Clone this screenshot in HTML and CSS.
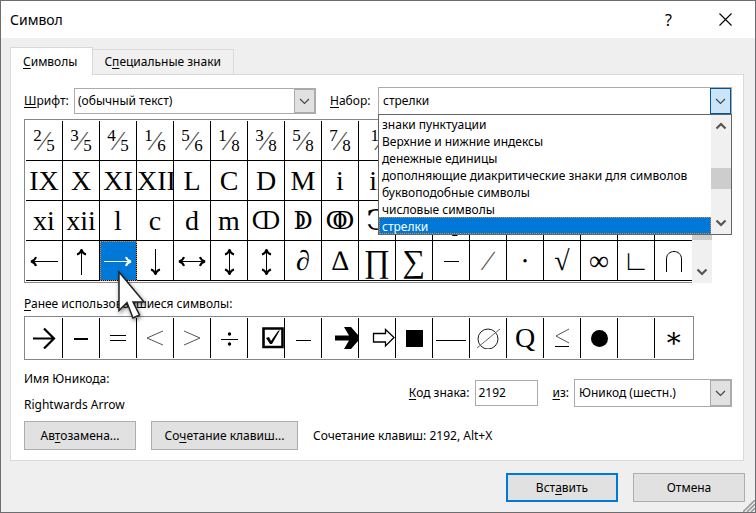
FILE: index.html
```html
<!DOCTYPE html>
<html lang="ru">
<head>
<meta charset="utf-8">
<title>Символ</title>
<link rel="stylesheet" href="styles.css">
</head>
<body>
<main class="dialog">
  <header class="titlebar">
    <h1>Символ</h1>
    <button class="tool help" aria-label="Справка">?</button>
    <button class="tool" aria-label="Закрыть"><svg width="13" height="13" viewBox="0 0 13 13"><path d="M.5.5l12 12M12.500.5l-12 12" stroke="#000" stroke-width="1.1" fill="none"/></svg></button>
  </header>
  <nav class="tabs" role="tablist">
    <button class="tab active" role="tab" aria-selected="true"><span><u>С</u>имволы</span></button>
    <button class="tab" role="tab" aria-selected="false"><span>С<u>п</u>ециальные знаки</span></button>
  </nav>
  <section class="panel">
    <div class="filters">
      <label for="font"><u>Ш</u>рифт:</label>
      <div class="combo font-combo">
        <select id="font"><option>(обычный текст)</option></select>
        <span class="drop"><svg width="11" height="7" viewBox="0 0 11 7"><path d="M1 1l4.500 4.500L10 1" fill="none" stroke="#444" stroke-width="1.200"/></svg></span>
      </div>
      <label for="subset" class="subset-label"><u>Н</u>абор:</label>
      <div class="combo subset-combo">
        <select id="subset"><option>стрелки</option></select>
        <span class="drop open"><svg width="11" height="7" viewBox="0 0 11 7"><path d="M1 1l4.500 4.500L10 1" fill="none" stroke="#444" stroke-width="1.200"/></svg></span>
        <div class="menu">
          <ul role="listbox" aria-label="Набор">
            <li role="option">знаки пунктуации</li>
            <li role="option">Верхние и нижние индексы</li>
            <li role="option">денежные единицы</li>
            <li role="option">дополняющие диакритические знаки для символов</li>
            <li role="option">буквоподобные символы</li>
            <li role="option">числовые символы</li>
            <li role="option" aria-selected="true" class="selected">стрелки</li>
          </ul>
          <div class="scroll">
            <svg width="12" height="8" viewBox="0 0 12 8"><path d="M1.500 6.500L6 2l4.500 4.500" fill="none" stroke="#555" stroke-width="2.200"/></svg>
            <span class="thumb"></span>
            <svg width="12" height="8" viewBox="0 0 12 8"><path d="M1.500 1.500L6 6l4.500-4.500" fill="none" stroke="#555" stroke-width="2.200"/></svg>
          </div>
        </div>
      </div>
    </div>

    <div class="symbols">
      <div class="grid-box">
        <table class="glyphs">
          <tr class="fractions"><td><sup>2</sup>⁄<sub>5</sub></td><td><sup>3</sup>⁄<sub>5</sub></td><td><sup>4</sup>⁄<sub>5</sub></td><td><sup>1</sup>⁄<sub>6</sub></td><td><sup>5</sup>⁄<sub>6</sub></td><td><sup>1</sup>⁄<sub>8</sub></td><td><sup>3</sup>⁄<sub>8</sub></td><td><sup>5</sup>⁄<sub>8</sub></td><td><sup>7</sup>⁄<sub>8</sub></td><td><sup>1</sup>⁄</td><td></td><td></td><td></td><td></td><td></td><td></td><td></td><td></td></tr>
          <tr><td>IX</td><td>X</td><td>XI</td><td>XII</td><td>L</td><td>C</td><td>D</td><td>M</td><td>i</td><td>ii</td><td></td><td></td><td></td><td></td><td></td><td></td><td></td><td></td></tr>
          <tr><td>xi</td><td>xii</td><td>l</td><td>c</td><td>d</td><td>m</td><td class="numeral">ↀ</td><td class="numeral">ↁ</td><td class="numeral">ↂ</td><td>Ↄ</td><td></td><td>q</td><td></td><td></td><td></td><td></td><td></td><td></td></tr>
          <tr class="arrows">
            <td><svg width="28" height="28" viewBox="0 0 28 28"><path class="shaft" d="M1 14.500h27"/><path class="head" d="M6 10q-1 3.500-5 4.500 4 1 5 4.500"/></svg></td>
            <td><svg width="28" height="28" viewBox="0 0 28 28"><path class="shaft" d="M14.500 2v26"/><path class="head" d="M10 7.500q3.500-1 4.500-5 1 4 4.500 5"/></svg></td>
            <td class="picked"><svg width="28" height="28" viewBox="0 0 28 28"><path class="shaft" d="M0 14.500h27"/><path class="head" d="M22 10q1 3.500 5 4.500-4 1-5 4.500"/></svg></td>
            <td><svg width="28" height="28" viewBox="0 0 28 28"><path class="shaft" d="M14.500 2v26"/><path class="head" d="M10 22.500q3.500 1 4.500 5 1-4 4.500-5"/></svg></td>
            <td><svg width="28" height="28" viewBox="0 0 28 28"><path class="shaft" d="M1 14.500h26"/><path class="head" d="M6 10q-1 3.500-5 4.500 4 1 5 4.500M22 10q1 3.500 5 4.500-4 1-5 4.500"/></svg></td>
            <td><svg width="28" height="28" viewBox="0 0 28 28"><path class="shaft" d="M14.500 2v26"/><path class="head" d="M10 7.500q3.500-1 4.500-5 1 4 4.500 5M10 22.500q3.500 1 4.500 5 1-4 4.500-5"/></svg></td>
            <td><svg width="28" height="28" viewBox="0 0 28 28"><path class="shaft" d="M14.500 2v26"/><path class="head" d="M10 7.500q3.500-1 4.500-5 1 4 4.500 5M10 22.500q3.500 1 4.500 5 1-4 4.500-5"/></svg></td>
            <td>∂</td><td>∆</td><td class="large">∏</td><td class="large">∑</td>
            <td><svg width="16" height="16" viewBox="0 0 16 16"><path class="shaft" d="M1 8.500h15"/></svg></td>
            <td class="slash">∕</td><td>∙</td><td>√</td><td>∞</td><td>∟</td>
            <td><svg width="18" height="22" viewBox="0 0 18 22"><path class="shaft" d="M1.500 22V9c0-10 15-10 15 0v13"/></svg></td>
          </tr>
        </table>
        <svg class="pointer" width="36" height="56" viewBox="0 0 36 56"><path d="M2 2v38.500l8-8L16 48l6.500-3-6.500-13h11z" fill="#fff" stroke="#222" stroke-width="1.500"/></svg>
      </div>
      <div class="scroll grid-scroll">
        <span class="thumb"></span>
        <svg width="12" height="8" viewBox="0 0 12 8"><path d="M1.500 1.500L6 6l4.500-4.500" fill="none" stroke="#555" stroke-width="2.200"/></svg>
      </div>
    </div>

    <h2 class="recent-label"><u>Р</u>анее использовавшиеся символы:</h2>
    <div class="recent-box">
      <table class="glyphs recent">
        <tr>
          <td><svg width="24" height="22" viewBox="0 0 24 22"><path d="M1 11.500h21M12 1.500l10 10-10 10" fill="none" stroke="#000" stroke-width="2.200"/></svg></td>
          <td><svg width="14" height="16" viewBox="0 0 14 16"><path d="M0 9h14" stroke="#000" stroke-width="2"/></svg></td>
          <td><svg width="16" height="16" viewBox="0 0 16 16"><path class="shaft" d="M0 5.500h16M0 10.500h16"/></svg></td>
          <td><svg width="18" height="16" viewBox="0 0 18 16"><path class="hair" d="M17 1L1 8l16 7"/></svg></td>
          <td><svg width="18" height="16" viewBox="0 0 18 16"><path class="hair" d="M1 1l16 7-16 7"/></svg></td>
          <td><svg width="18" height="16" viewBox="0 0 18 16"><path class="shaft" d="M1 9.500h17"/><circle cx="9.500" cy="4" r="1.700"/><circle cx="9.500" cy="14" r="1.700"/></svg></td>
          <td class="right"><svg width="22" height="22" viewBox="0 0 22 22"><path d="M1.500 1.500h19v18.500h-19z" fill="none" stroke="#000" stroke-width="2.600"/><path d="M4 11l3-1 2 4 7-10 2-1-8 14H8z"/></svg></td>
          <td><svg width="15" height="16" viewBox="0 0 15 16"><path class="shaft" d="M0 10.500h15"/></svg></td>
          <td class="right"><svg width="23" height="22" viewBox="0 0 23 22"><path d="M0 8.500h14L9 0h7l7 8v6l-7 8H9l5-8.500H0z"/></svg></td>
          <td class="right"><svg width="23" height="20" viewBox="0 0 23 20"><path d="M1.500 5.500h12V1.500L22 9.500l-8.500 8.500v-4h-12z" fill="none" stroke="#000" stroke-width="1.300"/></svg></td>
          <td><svg width="17" height="17" viewBox="0 0 17 17"><path d="M0 0h17v17H0z"/></svg></td>
          <td><svg width="30" height="16" viewBox="0 0 30 16"><path class="shaft" d="M0 10.500h30"/></svg></td>
          <td><svg width="24" height="22" viewBox="0 0 24 22"><circle cx="12" cy="12" r="10" fill="none" stroke="#222"/><path d="M1 21L24 2" stroke="#666"/></svg></td>
          <td>Q</td>
          <td><svg width="15" height="20" viewBox="0 0 15 20"><path class="hair" d="M14 1L1 8l13 7"/><path class="shaft" d="M0 18.500h14"/></svg></td>
          <td><svg width="17" height="17" viewBox="0 0 17 17"><circle cx="8.500" cy="8.500" r="8.500"/></svg></td>
          <td></td><td>∗</td>
        </tr>
      </table>
    </div>

    <div class="details">
      <div class="name"><p>Имя Юникода:</p><p>Rightwards Arrow</p></div>
      <div class="code">
        <label for="code"><u>К</u>од знака:</label>
        <input id="code" type="text" value="2192">
        <label for="from" class="from-label"><u>и</u>з:</label>
        <div class="combo from-combo">
          <select id="from"><option>Юникод (шестн.)</option></select>
          <span class="drop"><svg width="11" height="7" viewBox="0 0 11 7"><path d="M1 1l4.500 4.500L10 1" fill="none" stroke="#444" stroke-width="1.200"/></svg></span>
        </div>
      </div>
    </div>
    <div class="shortcuts">
      <button class="btn"><span>Ав<u>т</u>озамена...</span></button>
      <button class="btn wide"><span>Со<u>ч</u>етание клавиш...</span></button>
      <span>Сочетание клавиш: 2192, Alt+X</span>
    </div>
  </section>
  <footer class="actions">
    <button class="btn primary"><span>Вст<u>а</u>вить</span></button>
    <button class="btn">Отмена</button>
  </footer>
  <svg class="grip" width="12" height="12" viewBox="0 0 12 12"><path d="M0 12L12 0M4 12l8-8M8 12l4-4" stroke="#999" stroke-width="1.600"/></svg>
</main>
</body>
</html>
```
FILE: styles.css
```css
* { box-sizing: border-box; }
body { margin: 0; font: 12px/16px "Noto Sans", sans-serif; color: #000; }
button, select, input { font: inherit; color: inherit; margin: 0; border-radius: 0; }
u { text-decoration: underline; text-underline-offset: 2px; text-decoration-thickness: 1px; text-decoration-skip-ink: none; }
h1, h2, p, ul { margin: 0; padding: 0; font-weight: 400; }
svg { display: block; }

.dialog { position: relative; display: flex; flex-direction: column; min-height: 100vh; background: #efefef; border: 1px solid #6d6c6e; }
.titlebar { display: flex; align-items: center; height: 37px; padding: 0 1px 0 9px; background: #fff; }
.titlebar h1 { flex: 1; font-size: 14px; line-height: 20px; }
.tool { display: grid; place-items: center; width: 57px; height: 36px; padding: 0; border: 0; background: none; }
.help { font-size: 16px; }

.tabs { display: flex; align-items: flex-end; height: 36px; padding-left: 9px; }
.tab { height: 25px; padding: 0 12px 0 11px; border: 1px solid #d9d9d9; border-left: 0; border-bottom: 0; background: #f0f0f0; }
.tab.active { position: relative; height: 28px; margin-bottom: -1px; padding: 0 15px 0 12px; border-left: 1px solid #d9d9d9; background: #fff; }

.panel { flex: 1; margin: 0 11px 0 9px; padding: 12px 11px 10px 13px; border: 1px solid #d9d9d9; background: #fff; }
.filters { display: flex; align-items: center; height: 28px; margin-bottom: 4px; }
.filters label { width: 50px; }
.filters .subset-label { width: 48px; margin-left: 14px; }
.combo { position: relative; height: 26px; border: 1px solid #ababab; }
.combo select { display: block; width: 100%; height: 100%; padding: 0 24px 1px 3px; border: 0; outline: 0; background: #fff; appearance: none; }
.drop { position: absolute; top: 0; right: 0; bottom: 0; display: grid; place-items: center; width: 21px; border: 1px solid #ababab; background: #e1e1e1; pointer-events: none; }
.drop.open { border-color: #005499; background: #cce4f7; }
.font-combo { width: 242px; }
.subset-combo { flex: 1; height: 28px; }
.subset-combo select { padding: 0 24px 0 4px; }

.menu { position: absolute; z-index: 2; top: 26px; left: -1px; right: -1px; display: flex; border: 1px solid #646464; background: #fff; }
.menu ul { flex: 1; list-style: none; }
.menu li { height: 17px; padding-left: 3px; line-height: 20px; white-space: nowrap; }
.menu .selected { color: #fff; background: #0078d7; outline: 1px dotted #e08a3c; outline-offset: -1px; }
.scroll { display: flex; flex-direction: column; align-items: center; justify-content: space-between; width: 20px; padding: 7px 0; background: #f0f0f0; }
.scroll .thumb { width: 100%; height: 21px; background: #cdcdcd; }
.menu .scroll .thumb { margin-top: 8px; }

.symbols { display: flex; margin-right: 20px; }
.grid-box { position: relative; flex: 1; padding: 1px 0 1px 1px; border: 1px solid #828790; border-right: 0; }
.glyphs { width: 100%; table-layout: fixed; border-collapse: separate; border-spacing: 0; font: 28px/38px "Liberation Serif", "DejaVu Serif", serif; }
.glyphs td { height: 40px; padding: 0; border-right: 1px solid #000; border-bottom: 1px solid #000; text-align: center; white-space: nowrap; overflow: hidden; }
.glyphs td:last-child { border-right: 0; }
.glyphs td svg { margin: 0 auto; }
.glyphs .right svg { margin-right: 0; }
.glyphs sup, .glyphs sub { color: #000; font-size: 17px; line-height: 0; }
.glyphs sup { vertical-align: 9px; }
.glyphs sub { vertical-align: -1px; }
.fractions { color: #555; }
.glyphs .numeral { font-size: 24px; }
.glyphs .large { font-size: 32px; }
.glyphs .slash { color: #555; }
.shaft, .head, .hair { fill: none; stroke: currentColor; }
.head { stroke-width: 2; }
.hair { stroke: #555; }
.glyphs .picked { color: #fff; background: #0078d7; outline: 1px dotted #e08a3c; outline-offset: -1px; }
.grid-scroll { justify-content: flex-end; }
.grid-scroll .thumb { height: 114px; margin-bottom: 28px; }
.pointer { position: absolute; z-index: 1; top: 150px; left: 92px; filter: drop-shadow(1px 2px 2px rgba(0, 0, 0, .5)); }

.recent-label { margin: 13px 0 4px; font-size: 12px; }
.recent-box { margin-right: 38px; padding: 1px; border: 1px solid #828790; }
.recent td { border-bottom: 0; }

.details { display: flex; justify-content: space-between; height: 61px; padding-top: 11px; }
.name { display: grid; align-content: start; gap: 10px; }
.code { display: flex; align-items: center; height: 28px; margin-top: 8px; }
.code input { width: 63px; height: 26px; margin-left: 6px; padding: 0 4px 2px 2px; border: 1px solid #ababab; outline: 0; }
.from-label { margin-left: 14px; }
.from-combo { width: 158px; height: 28px; margin-left: 5px; }
.from-combo select { padding: 0 24px 0 4px; }

.shortcuts { display: flex; align-items: center; gap: 15px; }
.btn { width: 112px; height: 29px; padding: 0; border: 1px solid #adadad; background: #e1e1e1; }
.btn.wide { width: 147px; }
.btn.primary { border: 2px solid #0078d7; }
.actions { display: flex; justify-content: flex-end; gap: 15px; padding: 12px 10px 10px; }
.grip { position: absolute; right: 0; bottom: 0; }
```
